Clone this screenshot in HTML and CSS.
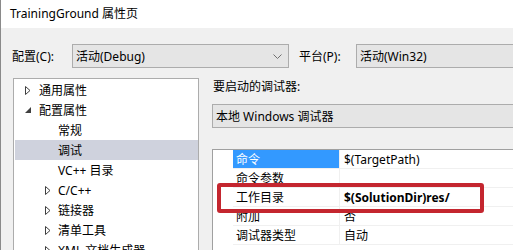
FILE: index.html
```html
<!DOCTYPE html>
<html lang="zh-CN">
<head>
<meta charset="utf-8">
<title>TrainingGround 属性页</title>
<link rel="stylesheet" href="styles.css">
</head>
<body>
<div class="window">
  <div class="titlebar">TrainingGround 属性页</div>
  <div class="client">
    <div class="config-row">
      <span class="lbl lbl-config">配置(C):</span>
      <div class="combo combo-config">
        <span class="combo-text">活动(Debug)</span>
        <svg class="chev" width="9" height="6" viewBox="0 0 9 6"><polyline points="0.5,0.5 4.5,4.5 8.5,0.5" fill="none" stroke="#707070" stroke-width="1"/></svg>
      </div>
      <span class="lbl lbl-platform">平台(P):</span>
      <div class="combo combo-platform"><span class="combo-text">活动(Win32)</span></div>
    </div>
    <div class="main">
      <div class="tree">
        <div class="node l0"><span class="tw"><svg width="6" height="9" viewBox="0 0 6 9"><polygon points="0.5,0.5 5,4.5 0.5,8.5" fill="none" stroke="#404040" stroke-width="1"/></svg></span>通用属性</div>
        <div class="node l0"><span class="tw"><svg width="6" height="6" viewBox="0 0 6 6"><polygon points="6,0 6,6 0,6" fill="#404040"/></svg></span>配置属性</div>
        <div class="node l1 leaf">常规</div>
        <div class="node l1 leaf selected">调试</div>
        <div class="node l1 leaf">VC++ 目录</div>
        <div class="node l1"><span class="tw"><svg width="6" height="9" viewBox="0 0 6 9"><polygon points="0.5,0.5 5,4.5 0.5,8.5" fill="none" stroke="#404040" stroke-width="1"/></svg></span>C/C++</div>
        <div class="node l1"><span class="tw"><svg width="6" height="9" viewBox="0 0 6 9"><polygon points="0.5,0.5 5,4.5 0.5,8.5" fill="none" stroke="#404040" stroke-width="1"/></svg></span>链接器</div>
        <div class="node l1"><span class="tw"><svg width="6" height="9" viewBox="0 0 6 9"><polygon points="0.5,0.5 5,4.5 0.5,8.5" fill="none" stroke="#404040" stroke-width="1"/></svg></span>清单工具</div>
        <div class="node l1"><span class="tw"><svg width="6" height="9" viewBox="0 0 6 9"><polygon points="0.5,0.5 5,4.5 0.5,8.5" fill="none" stroke="#404040" stroke-width="1"/></svg></span>XML 文档生成器</div>
      </div>
      <div class="panel">
        <div class="panel-label">要启动的调试器:</div>
        <div class="combo combo-debugger"><span class="combo-text">本地 Windows 调试器</span></div>
        <div class="grid">
          <div class="row"><div class="gutter"></div><div class="name sel">命令</div><div class="value">$(TargetPath)</div></div>
          <div class="row"><div class="gutter"></div><div class="name">命令参数</div><div class="value"></div></div>
          <div class="row"><div class="gutter"></div><div class="name">工作目录</div><div class="value bold">$(SolutionDir)res/</div></div>
          <div class="row"><div class="gutter"></div><div class="name">附加</div><div class="value">否</div></div>
          <div class="row"><div class="gutter"></div><div class="name">调试器类型</div><div class="value">自动</div></div>
          <div class="mark"></div>
        </div>
      </div>
    </div>
  </div>
</div>
</body>
</html>
```
FILE: styles.css
```css
* { box-sizing: border-box; }
html, body { margin: 0; padding: 0; }
body {
  width: 513px;
  height: 250px;
  overflow: hidden;
  font-family: "Noto Sans", "Noto Sans CJK SC", sans-serif;
  font-size: 12px;
  color: #000;
  background: #f0f0f0;
}
.window {
  width: 513px;
  height: 250px;
  overflow: hidden;
  border-left: 1px solid #8a8a8a;
  background: #f0f0f0;
}
.titlebar {
  height: 28px;
  line-height: 28px;
  background: #fff;
  padding-left: 9px;
  white-space: nowrap;
}
.client {
  padding-top: 16px;
}
.config-row {
  display: flex;
  align-items: center;
  height: 24px;
  white-space: nowrap;
}
.lbl { display: block; flex-shrink: 0; }
.lbl-config { width: 71px; padding-left: 11px; }
.lbl-platform { width: 57px; }
.combo {
  height: 24px;
  background: #e5e5e5;
  border: 1px solid #acacac;
  display: flex;
  align-items: center;
  padding-left: 3px;
  white-space: nowrap;
  flex-shrink: 0;
}
.combo-config { width: 217px; margin-right: 10px; justify-content: space-between; padding-right: 6px; }
.combo-platform { width: 220px; }
.chev { display: block; margin-top: 1px; }
.main {
  display: flex;
  margin-top: 10px;
}
.tree {
  margin-left: 12px;
  width: 186px;
  height: 200px;
  flex-shrink: 0;
  background: #fff;
  border: 1px solid #acacac;
  padding: 1px 0 0 1px;
}
.node {
  height: 20px;
  display: flex;
  align-items: center;
  white-space: nowrap;
}
.node.l0 { padding-left: 10px; }
.node.l1 { padding-left: 30px; }
.node.leaf { padding-left: 43px; }
.tw {
  width: 14px;
  display: flex;
  align-items: center;
  flex-shrink: 0;
}
.tw svg { display: block; }
.node.l1 .tw { width: 13px; }
.selected { background: #cfd2dd; }
.panel {
  margin-left: 13px;
  width: 320px;
  flex-shrink: 0;
}
.panel-label {
  height: 18px;
  line-height: 18px;
  padding-left: 1px;
  white-space: nowrap;
}
.combo-debugger {
  margin-top: 8px;
  width: 320px;
}
.grid {
  position: relative;
  margin-top: 21px;
  background: #fff;
  border-top: 1px solid #a0a0a0;
  border-left: 1px solid #a0a0a0;
  height: 120px;
}
.row {
  display: flex;
  height: 19px;
}
.gutter { width: 20px; flex-shrink: 0; }
.name, .value {
  height: 19px;
  line-height: 19px;
  border-bottom: 1px solid #f0f0f0;
  white-space: nowrap;
}
.name {
  width: 107px;
  padding-left: 3px;
  border-right: 1px solid #f0f0f0;
  flex-shrink: 0;
}
.name.sel { background: #3399ff; color: #fff; }
.value { flex: 1; padding-left: 4px; }
.bold { font-weight: bold; }
.mark {
  position: absolute;
  left: 4px;
  top: 33px;
  width: 267px;
  height: 30px;
  border: 4px solid #c4262f;
  border-radius: 3px;
}
```
